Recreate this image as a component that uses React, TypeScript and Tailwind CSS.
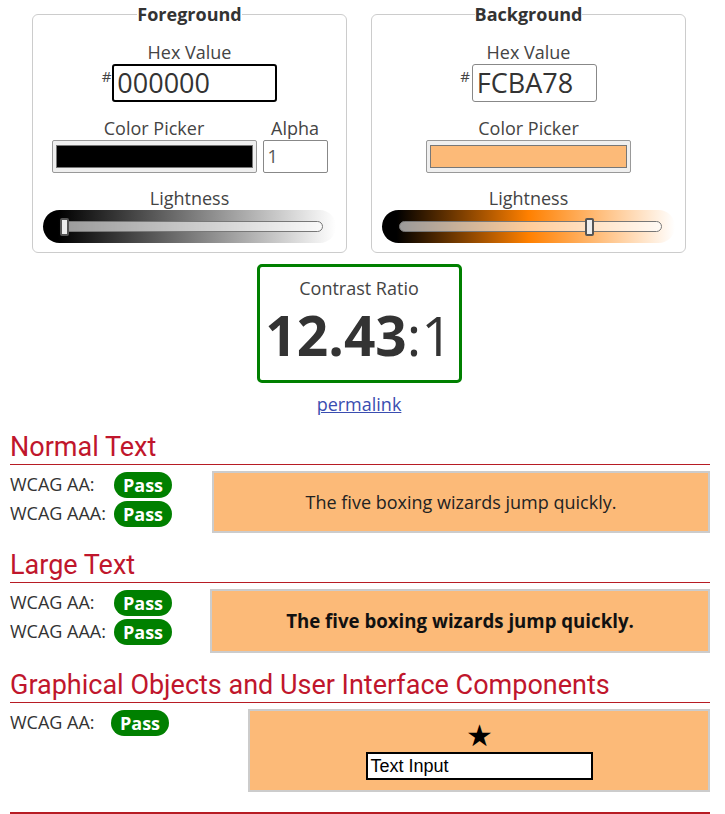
import React from "react";

const OS = "font-['Open_Sans',sans-serif]";

function Slider({ gradient, pos }: { gradient: string; pos: number }) {
  return (
    <div className={`h-[33px] w-[293px] rounded-full ${gradient} pl-[17px] pr-[13px] pt-[11px]`}>
      <div className="relative h-[11px] rounded-full border border-[#777] bg-[rgba(255,255,255,0.6)]">
        <div
          className="absolute top-[-4px] h-[18px] w-[9px] rounded-[2px] border-2 border-[#555] bg-[#eee]"
          style={{ left: pos }}
        />
      </div>
    </div>
  );
}

function Picker({ color }: { color: string }) {
  return (
    <div className="h-[33px] w-[205px] rounded-[2px] border border-[#999] bg-[#efefef] px-[3px] py-[4px]">
      <div className="h-full w-full border border-[#777]" style={{ background: color }} />
    </div>
  );
}

function Pass() {
  return (
    <span className="inline-flex h-[26px] w-[58px] items-center justify-center rounded-full bg-[#008000] text-[18px] font-bold leading-[26px] text-white">
      Pass
    </span>
  );
}

function Heading({ children }: { children: React.ReactNode }) {
  return (
    <div className="border-b border-[#b71c24]">
      <h2 className="font-['Roboto',sans-serif] text-[27px] leading-[34px] text-[#c0162c]">{children}</h2>
    </div>
  );
}

function Row({ label, w }: { label: string; w: string }) {
  return (
    <div className="flex h-[29px] items-center">
      <span className={`${w} text-[18px] text-[#333]`}>{label}</span>
      <Pass />
    </div>
  );
}

export default function App() {
  return (
    <div className={`${OS} w-[720px] bg-white px-[10px] text-[#333]`}>
      <div className="flex gap-[24px] pl-[22px] pr-[24px]">
        <fieldset className="mt-[2px] w-[315px] rounded-[6px] border border-[#ccc] pb-[9px]">
          <legend className="mx-auto px-0 text-[18px] font-bold leading-[24px] text-[#333]">Foreground</legend>
          <div className="flex flex-col items-center">
            <div className="mt-[14px] text-[18px] leading-[24px] text-[#444]">Hex Value</div>
            <div className="flex items-start">
              <span className="mt-[4px] mr-[1px] text-[15px] leading-[16px] text-[#444]">#</span>
              <div className="flex h-[38px] w-[165px] items-center rounded-[3px] border-2 border-black pl-[3px] text-[27px] text-[#333]">
                000000
              </div>
            </div>
            <div className="mt-[14px] flex gap-[6px]">
              <div className="flex flex-col items-center">
                <div className="text-[18px] leading-[24px] text-[#444]">Color Picker</div>
                <Picker color="#000000" />
              </div>
              <div className="flex flex-col items-center">
                <div className="text-[18px] leading-[24px] text-[#444]">Alpha</div>
                <div className="flex h-[33px] w-[65px] items-center rounded-[2px] border border-[#888] pl-[4px] text-[18px] text-[#555]">
                  1
                </div>
              </div>
            </div>
            <div className="mt-[13px] text-[18px] leading-[24px] text-[#444]">Lightness</div>
            <Slider gradient="bg-[linear-gradient(to_right,#000_5%,#fff_100%)]" pos={-1} />
          </div>
        </fieldset>
        <fieldset className="mt-[2px] w-[315px] rounded-[6px] border border-[#ccc] pb-[9px]">
          <legend className="mx-auto px-0 text-[18px] font-bold leading-[24px] text-[#333]">Background</legend>
          <div className="flex flex-col items-center">
            <div className="mt-[14px] text-[18px] leading-[24px] text-[#444]">Hex Value</div>
            <div className="flex items-start">
              <span className="mt-[4px] mr-[2px] text-[15px] leading-[16px] text-[#444]">#</span>
              <div className="flex h-[38px] w-[125px] items-center rounded-[3px] border border-[#888] pl-[4px] text-[27px] text-[#333]">
                FCBA78
              </div>
            </div>
            <div className="mt-[14px] flex flex-col items-center">
              <div className="text-[18px] leading-[24px] text-[#444]">Color Picker</div>
              <Picker color="#FCBA78" />
            </div>
            <div className="mt-[13px] text-[18px] leading-[24px] text-[#444]">Lightness</div>
            <Slider gradient="bg-[linear-gradient(to_right,#000_5%,#ff8000_50%,#fff_100%)]" pos={185} />
          </div>
        </fieldset>
      </div>

      <div className="mt-[11px] flex flex-col items-center pr-[2px]">
        <div className="flex h-[119px] w-[205px] flex-col items-center rounded-[5px] border-[3px] border-[#008000]">
          <div className="mt-[9px] text-[18px] leading-[24px] text-[#444]">Contrast Ratio</div>
          <div className="mt-[5px] text-[55px] leading-[60px] text-[#333]">
            <span className="font-bold">12.43</span>
            <span>:1</span>
          </div>
        </div>
        <a href="#" className="mt-[9px] text-[18px] leading-[24px] text-[#3a4db0] underline">
          permalink
        </a>
      </div>

      <div className="mt-[14px]">
        <Heading>Normal Text</Heading>
        <div className="mt-[5px] flex">
          <div className="w-[202px]">
            <Row label="WCAG AA:" w="w-[104px]" />
            <Row label="WCAG AAA:" w="w-[104px]" />
          </div>
          <div className="mt-[1px] flex h-[62px] flex-1 items-center justify-center border-2 border-[#ccc] bg-[#FCBA78] text-[18px] text-[#222]">
            The five boxing wizards jump quickly.
          </div>
        </div>
      </div>

      <div className="mt-[15px]">
        <Heading>Large Text</Heading>
        <div className="mt-[5px] flex">
          <div className="w-[200px]">
            <Row label="WCAG AA:" w="w-[104px]" />
            <Row label="WCAG AAA:" w="w-[104px]" />
          </div>
          <div className="mt-[1px] flex h-[64px] flex-1 items-center justify-center border-2 border-[#ccc] bg-[#FCBA78] text-[18.67px] font-bold text-[#111]">
            The five boxing wizards jump quickly.
          </div>
        </div>
      </div>

      <div className="mt-[15px]">
        <Heading>Graphical Objects and User Interface Components</Heading>
        <div className="mt-[5px] flex">
          <div className="w-[238px]">
            <Row label="WCAG AA:" w="w-[101px]" />
          </div>
          <div className="mt-[1px] flex h-[83px] flex-1 flex-col items-center border-2 border-[#ccc] bg-[#FCBA78]">
            <div className="mt-[9px] text-[30px] leading-[30px] text-black">★</div>
            <div className="mt-[2px] flex h-[28px] w-[227px] items-center border-2 border-black bg-white pl-[3px] font-['Liberation_Sans',sans-serif] text-[18px] text-black">
              Text Input
            </div>
          </div>
        </div>
      </div>

      <div className="mt-[20px] h-[2px] bg-[#b71c24]" />
    </div>
  );
}
